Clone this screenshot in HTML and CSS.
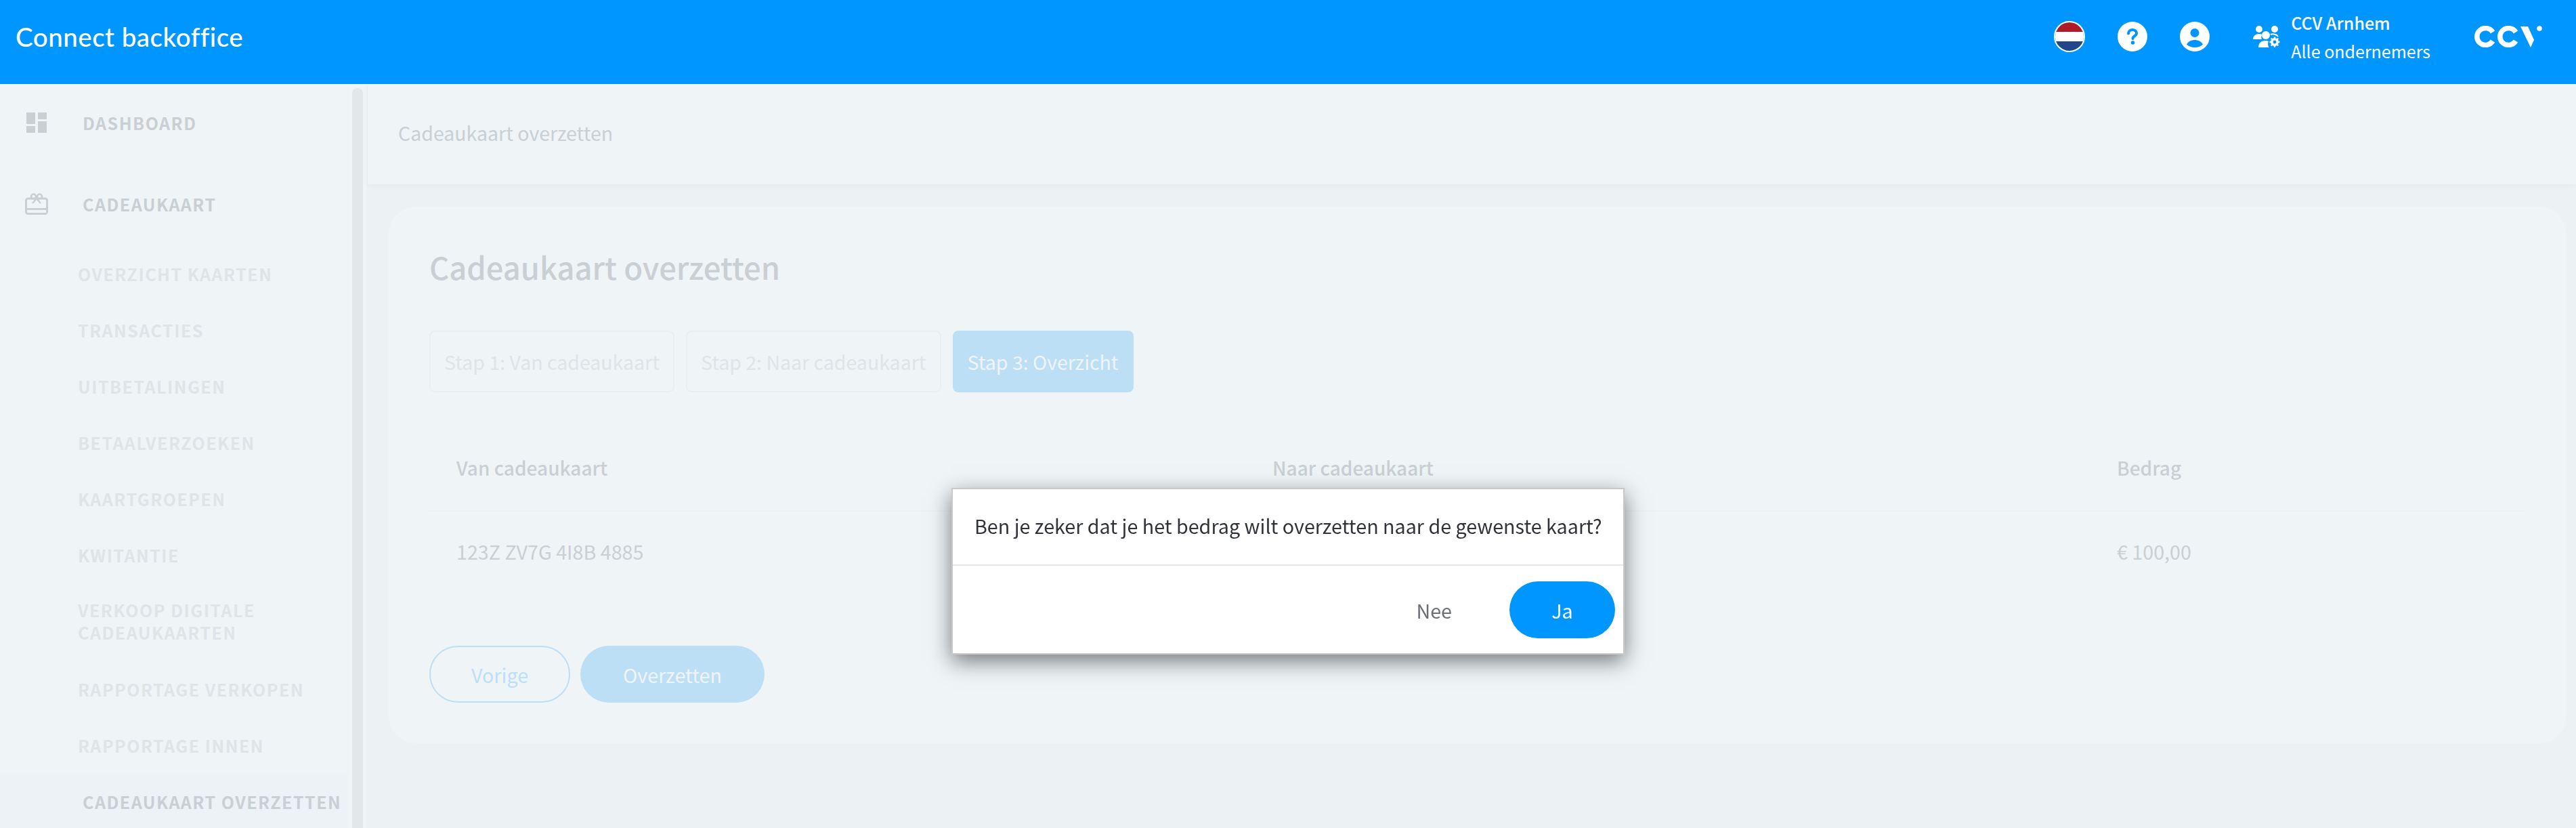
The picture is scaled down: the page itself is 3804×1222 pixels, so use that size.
FILE: index.html
```html
<!DOCTYPE html>
<html lang="nl">
<head>
    <meta charset="UTF-8">
    <meta name="viewport" content="width=device-width, initial-scale=1.0">
    <title>Connect backoffice</title>
    <link rel="stylesheet" href="styles.css">
</head>
<body>
    <header class="topbar">
        <div class="brand">Connect backoffice</div>
        <div class="topbar-right">
            <svg class="flag" viewBox="0 0 46 46">
                <clipPath id="flag-clip"><circle cx="23" cy="23" r="21"/></clipPath>
                <g clip-path="url(#flag-clip)">
                    <rect width="46" height="16" fill="#ae1c28"/>
                    <rect y="16" width="46" height="14" fill="#fff"/>
                    <rect y="30" width="46" height="16" fill="#21468b"/>
                </g>
                <circle cx="23" cy="23" r="22" fill="none" stroke="#fff" stroke-width="2"/>
            </svg>
            <svg class="round-icon" viewBox="0 0 44 44">
                <circle cx="22" cy="22" r="22" fill="#fff"/>
                <path d="M16 17.500c0-3.400 2.700-5.500 6-5.500s6 2 6 5c0 4.500-5.500 4-5.500 8" fill="none" stroke="#0096ff" stroke-width="4" stroke-linecap="round"/>
                <circle cx="22.500" cy="31" r="2.800" fill="#0096ff"/>
            </svg>
            <svg class="round-icon" viewBox="0 0 44 44">
                <circle cx="22" cy="22" r="22" fill="#fff"/>
                <circle cx="22" cy="16.500" r="6.500" fill="#0096ff"/>
                <path d="M10 33.500c2.500-4.500 7-6.500 12-6.500s9.500 2 12 6.500c-3 2.800-7 4.500-12 4.500s-9-1.700-12-4.500z" fill="#0096ff"/>
            </svg>
            <div class="merchant">
                <svg class="group-icon" viewBox="0 0 40 32">
                    <circle cx="9" cy="5" r="5" fill="#fff"/>
                    <circle cx="32" cy="5" r="5" fill="#fff"/>
                    <path d="M0 20c0-5 4-8 9-8 2 0 3.500.5 4.500 1-1.500 2-1.500 5-.5 7z" fill="#fff"/>
                    <path d="M26 13c2-1 8-1.500 11 3" fill="none" stroke="#fff" stroke-width="2"/>
                    <circle cx="19" cy="14" r="6" fill="#fff"/>
                    <path d="M8 32c0-6 4-10 10-10 2 0 3.500.3 5 1-1.500 3-1 6.500.5 9z" fill="#fff"/>
                    <circle cx="32" cy="24" r="4.200" fill="none" stroke="#fff" stroke-width="3.500"/>
                    <path d="M32 16.500v3M32 28.500v3M24.500 24h3M36.500 24h3M26.700 18.700l2 2M35.300 27.300l2 2M37.300 18.700l-2 2M28.700 27.300l-2 2" stroke="#fff" stroke-width="2.500"/>
                </svg>
                <div class="merchant-text">
                    <div class="merchant-name">CCV Arnhem</div>
                    <div class="merchant-sub">Alle ondernemers</div>
                </div>
            </div>
            <svg class="ccv-logo" viewBox="0 0 100 32">
                <path d="M27 9.500a12.500 12.500 0 1 0 0 13" fill="none" stroke="#fff" stroke-width="7.500"/>
                <path d="M61 9.500a12.500 12.500 0 1 0 0 13" fill="none" stroke="#fff" stroke-width="7.500"/>
                <path d="M68 1h11l9 20-5 11z" fill="#fff"/>
                <circle cx="96" cy="4" r="3.800" fill="#fff"/>
            </svg>
        </div>
    </header>

    <div class="layout">
        <nav class="sidebar">
            <div class="nav-list">
                <div class="nav-main">
                    <svg class="nav-icon" viewBox="0 0 30 30">
                        <path d="M0 0h13v17H0zM17 0h13v10H17zM17 13h13v17H17zM0 20h13v10H0z" fill="#c9cfd2"/>
                    </svg>
                    <span>DASHBOARD</span>
                </div>
                <div class="nav-main nav-main-second">
                    <svg class="nav-icon nav-icon-gift" viewBox="0 0 34 32">
                        <rect x="1.500" y="8" width="31" height="22.500" rx="3" fill="none" stroke="#c9cfd2" stroke-width="3"/>
                        <rect x="1" y="22" width="32" height="3" fill="#c9cfd2"/>
                        <circle cx="12.500" cy="5" r="3.500" fill="none" stroke="#c9cfd2" stroke-width="2.500"/>
                        <circle cx="21.500" cy="5" r="3.500" fill="none" stroke="#c9cfd2" stroke-width="2.500"/>
                        <path d="M17 8l-6 7M17 8l6 7" fill="none" stroke="#c9cfd2" stroke-width="2.500"/>
                    </svg>
                    <span>CADEAUKAART</span>
                </div>
                <a class="nav-sub">OVERZICHT KAARTEN</a>
                <a class="nav-sub">TRANSACTIES</a>
                <a class="nav-sub">UITBETALINGEN</a>
                <a class="nav-sub">BETAALVERZOEKEN</a>
                <a class="nav-sub">KAARTGROEPEN</a>
                <a class="nav-sub">KWITANTIE</a>
                <a class="nav-sub nav-sub-two">VERKOOP DIGITALE<br>CADEAUKAARTEN</a>
                <a class="nav-sub">RAPPORTAGE VERKOPEN</a>
                <a class="nav-sub">RAPPORTAGE INNEN</a>
                <a class="nav-sub nav-active">CADEAUKAART OVERZETTEN</a>
            </div>
            <div class="scrollbar"><div class="scroll-thumb"></div></div>
        </nav>

        <main class="content">
            <div class="breadcrumb">Cadeaukaart overzetten</div>
            <section class="card">
                <h1>Cadeaukaart overzetten</h1>
                <div class="steps">
                    <div class="step">Stap 1: Van cadeaukaart</div>
                    <div class="step">Stap 2: Naar cadeaukaart</div>
                    <div class="step step-active">Stap 3: Overzicht</div>
                </div>
                <div class="table">
                    <div class="table-row table-head">
                        <div>Van cadeaukaart</div>
                        <div>Naar cadeaukaart</div>
                        <div>Bedrag</div>
                    </div>
                    <div class="table-row table-body">
                        <div>123Z ZV7G 4I8B 4885</div>
                        <div></div>
                        <div>€ 100,00</div>
                    </div>
                </div>
                <div class="actions">
                    <button type="button" class="btn btn-outline">Vorige</button>
                    <button type="button" class="btn btn-fill">Overzetten</button>
                </div>
            </section>
        </main>
    </div>

    <div class="modal">
        <div class="modal-text">Ben je zeker dat je het bedrag wilt overzetten naar de gewenste kaart?</div>
        <div class="modal-footer">
            <button type="button" class="modal-no">Nee</button>
            <button type="button" class="modal-yes">Ja</button>
        </div>
    </div>
</body>
</html>
```

FILE: styles.css
```css
* {
    box-sizing: border-box;
}

html, body {
    margin: 0;
    padding: 0;
    height: 1222px;
    overflow: hidden;
}

body {
    font-family: "Noto Sans CJK SC", "Open Sans", sans-serif;
    background-color: #ecf1f4;
    color: #c9cfd2;
}

.topbar {
    height: 124px;
    background-color: #0096ff;
    color: #fff;
    display: flex;
    align-items: center;
    justify-content: space-between;
    padding: 0 50px 16px 23px;
}

.brand {
    font-family: Lato, sans-serif;
    font-size: 38.5px;
    font-weight: 500;
    letter-spacing: 0.5px;
}

.topbar-right {
    display: flex;
    align-items: center;
}

.flag {
    width: 46px;
    height: 46px;
    margin-right: 48px;
}

.round-icon {
    width: 44px;
    height: 44px;
    margin-right: 48px;
}

.round-icon + .merchant {
    margin-left: 16px;
}

.merchant {
    display: flex;
    align-items: center;
    margin-right: 65px;
}

.group-icon {
    width: 40px;
    height: 32px;
    margin-right: 16px;
}

.merchant-name {
    font-size: 25px;
    font-weight: 500;
    line-height: 42px;
}

.merchant-sub {
    font-size: 25px;
    line-height: 42px;
}

.ccv-logo {
    width: 100px;
    height: 32px;
}

.layout {
    display: flex;
    height: 1098px;
}

.sidebar {
    width: 543px;
    display: flex;
    background-color: #eff4f7;
    flex-shrink: 0;
}

.nav-list {
    width: 514px;
    flex-shrink: 0;
    padding-top: 36px;
    border-right: 1px solid #ecf1f4;
}

.nav-main {
    display: flex;
    align-items: center;
    height: 42px;
    padding-left: 39px;
    font-size: 25px;
    font-weight: 700;
    letter-spacing: 1.5px;
    color: #c9cfd2;
}

.nav-main-second {
    margin-top: 78px;
    margin-bottom: 61px;
}

.nav-icon {
    width: 30px;
    height: 30px;
    margin-right: 53px;
}

.nav-icon-gift {
    width: 34px;
    height: 32px;
    margin-left: -2px;
    margin-right: 51px;
}

.nav-sub {
    display: block;
    padding-left: 115px;
    height: 83px;
    font-size: 25px;
    line-height: 42px;
    font-weight: 700;
    letter-spacing: 1.5px;
    color: #dfe4e7;
    white-space: nowrap;
}

.nav-sub-two {
    height: 115px;
    line-height: 33px;
    padding-top: 3px;
}

.nav-active {
    height: 79px;
    padding: 19px 0 0 122px;
    margin-top: -19px;
    background-color: #ecf2f6;
    color: #c9cfd2;
}

.scrollbar {
    flex: 1;
    background-color: #eff4f7;
    padding: 6px 6px 0;
    border-right: 1px solid #e9eef1;
}

.scroll-thumb {
    height: 100%;
    background-color: #e2e7ea;
    border-radius: 8px 8px 0 0;
}

.content {
    flex: 1;
}

.breadcrumb {
    height: 148px;
    padding: 50px 0 0 45px;
    background-color: #eff4f7;
    font-size: 28.5px;
    line-height: 44px;
    box-shadow: 0 2px 8px rgba(0, 0, 0, 0.03);
}

.card {
    margin: 33px 14px 0 31px;
    height: 792px;
    padding: 52px 60px 0;
    background-color: #eff4f7;
    border-radius: 40px;
}

h1 {
    margin: 0;
    font-size: 45.3px;
    line-height: 72px;
    font-weight: 500;
    color: #c9cfd2;
}

.steps {
    display: flex;
    gap: 17px;
    margin-top: 59px;
}

.step {
    height: 91px;
    padding: 0 20px;
    display: flex;
    align-items: center;
    font-size: 28.5px;
    color: #dfe4e7;
    border: 2px solid #e9eef1;
    border-radius: 8px;
}

.step-active {
    background-color: #bddff6;
    border-color: #bddff6;
    color: #eff4f7;
}

.table {
    margin-top: 76px;
}

.table-row {
    display: grid;
    grid-template-columns: 1205px 1247px 1fr;
    padding: 0 40px;
}

.table-head {
    height: 100px;
    font-size: 28px;
    line-height: 70px;
    font-weight: 500;
    border-bottom: 2px solid #ecf1f4;
}

.table-body {
    height: 120px;
    font-size: 28.7px;
    line-height: 118px;
}

.actions {
    display: flex;
    gap: 15px;
    margin-top: 78px;
}

.btn {
    height: 84px;
    border-radius: 42px;
    font-family: inherit;
    font-size: 28.7px;
}

.btn-outline {
    width: 208px;
    background: transparent;
    border: 2px solid #bddff6;
    color: #bddff6;
}

.btn-fill {
    width: 272px;
    background-color: #bddff6;
    border: none;
    color: #eff4f7;
}

.modal {
    position: fixed;
    left: 1405px;
    top: 720px;
    width: 994px;
    height: 246px;
    background-color: #fff;
    border: 2px solid #c9c9c9;
    box-shadow: 0 10px 30px rgba(0, 0, 0, 0.5);
    color: #30343a;
}

.modal-text {
    height: 113px;
    padding: 33px 0 0 32px;
    font-size: 28.7px;
    line-height: 42px;
    border-bottom: 2px solid #e6e6e6;
    white-space: nowrap;
}

.modal-footer {
    display: flex;
    justify-content: flex-end;
    align-items: center;
    padding: 23px 12px 0 0;
}

.modal-no {
    background: none;
    border: none;
    padding: 0;
    margin-right: 85px;
    font-family: inherit;
    font-size: 28.7px;
    color: #6b7078;
}

.modal-yes {
    width: 156px;
    height: 84px;
    border: none;
    border-radius: 42px;
    background-color: #0096ff;
    color: #fff;
    font-family: inherit;
    font-size: 28.7px;
}
```
